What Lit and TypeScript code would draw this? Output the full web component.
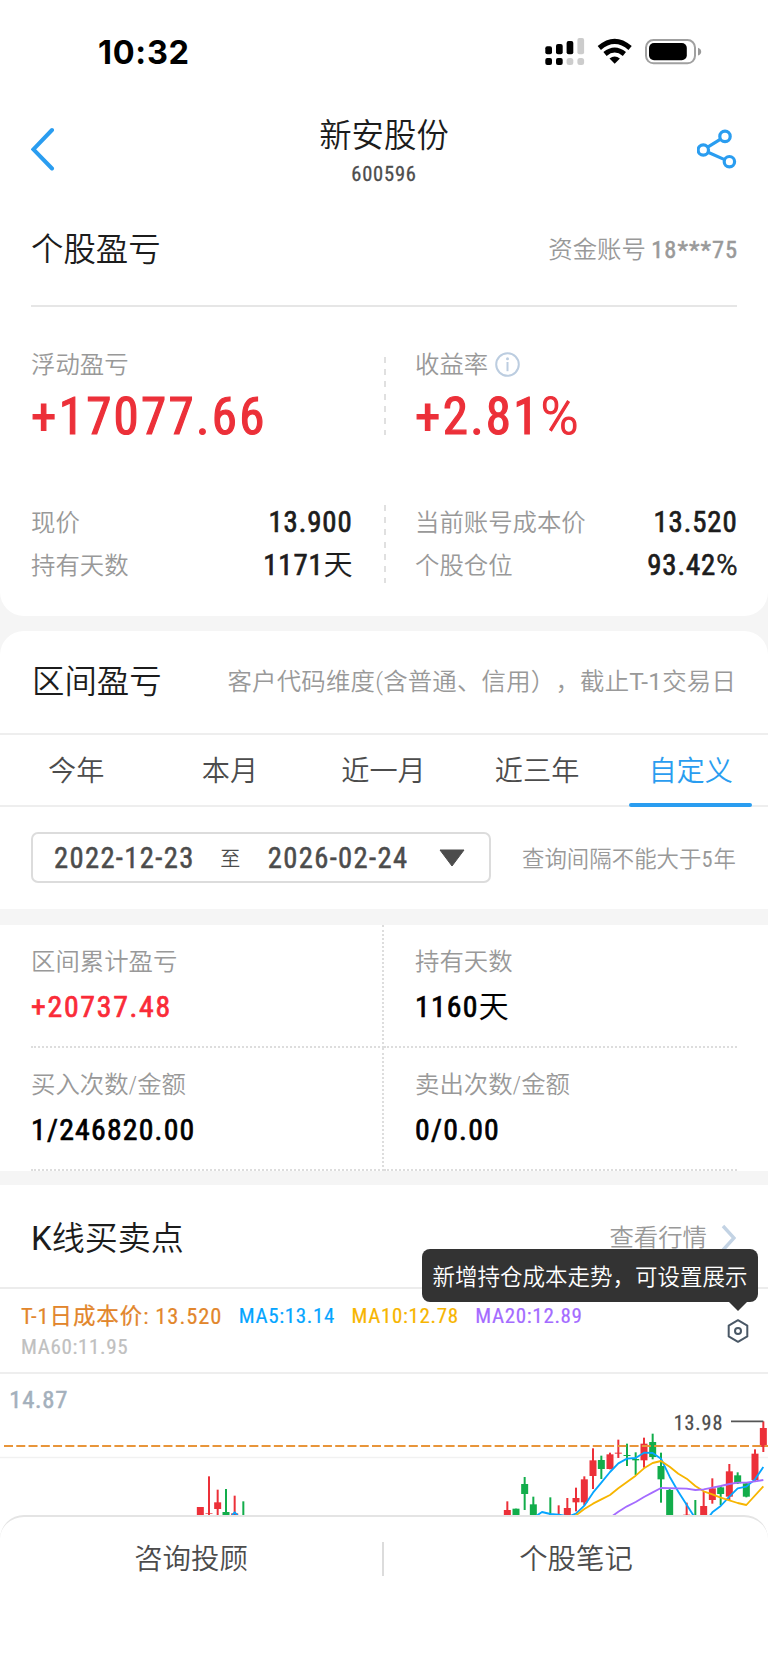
import { LitElement, html, css, svg } from "lit";
import { customElement } from "lit/decorators.js";

const RED = "#ec3039";
const GREEN = "#12ad4b";

// x, high, low, body top, body bottom, colour (chart units: one third of a pixel)
type Candle = [number, number, number, number, number, string];
const candles: Candle[] = [
  [601, 381, 420, 381, 420, RED],
  [627, 289, 420, 400, 402, RED],
  [653, 329, 420, 367, 387, RED],
  [678, 327, 420, 396, 420, GREEN],
  [704, 347, 420, 400, 420, RED],
  [730, 364, 420, 420, 420, GREEN],
  [1522, 364, 420, 390, 420, RED],
  [1548, 386, 420, 386, 420, GREEN],
  [1574, 291, 390, 312, 342, GREEN],
  [1600, 350, 420, 373, 420, GREEN],
  [1651, 352, 420, 420, 420, GREEN],
  [1676, 376, 420, 420, 420, RED],
  [1702, 354, 420, 384, 420, RED],
  [1728, 323, 394, 354, 367, RED],
  [1753, 289, 375, 298, 367, RED],
  [1779, 205, 327, 241, 288, RED],
  [1804, 227, 297, 240, 267, GREEN],
  [1830, 218, 268, 223, 267, RED],
  [1855, 179, 234, 218, 221, RED],
  [1881, 191, 258, 225, 228, GREEN],
  [1907, 217, 285, 237, 241, GREEN],
  [1932, 173, 263, 191, 241, RED],
  [1958, 161, 238, 186, 231, GREEN],
  [1983, 218, 368, 258, 298, GREEN],
  [2009, 325, 420, 330, 420, GREEN],
  [2060, 368, 420, 404, 420, RED],
  [2086, 360, 420, 420, 420, GREEN],
  [2111, 335, 420, 378, 420, RED],
  [2137, 295, 371, 325, 360, RED],
  [2162, 318, 375, 322, 342, GREEN],
  [2188, 252, 361, 274, 350, RED],
  [2213, 277, 312, 286, 310, GREEN],
  [2239, 308, 352, 310, 350, GREEN],
  [2265, 208, 303, 221, 300, RED],
  [2290, 124, 216, 144, 201, RED],
];

const averages: [string, string][] = [
  ["#05a5ff", "M690 414L704 397L720 414"],
  ["#05a5ff", "M1600 414L1626 396L1651 402L1676 404L1706 409L1728 401L1753 377L1779 338L1804 308L1830 276L1855 250L1881 236L1907 234L1932 218L1958 219L1983 236L2009 290L2035 335L2084 412M2126 412L2137 397L2162 378L2188 350L2213 325L2239 320L2265 298L2290 261"],
  ["#f7b500", "M1720 412L1753 387L1779 371L1804 358L1830 345L1855 325L1881 306L1907 287L1932 265L1958 249L1983 243L2009 260L2035 281L2060 296L2086 318L2111 334L2137 343L2162 353L2188 361L2213 369L2239 375L2290 319"],
  ["#a46bff", "M1832 412L1855 395L1881 379L1907 366L1932 351L1958 337L1983 324L2060 326L2086 330L2111 328L2137 323L2162 318L2188 312L2213 308L2239 308L2265 304L2290 300"],
];

@customElement("k-chart")
class KChart extends LitElement {
  static styles = css`
    :host { display: block; height: 141px; }
    svg { display: block; width: 768px; height: 141px; font-family: Roboto, sans-serif; font-stretch: 75%; font-weight: 400; }
    .axis { font-size: 74px; fill: #a4b0bc; stroke: #a4b0bc; stroke-width: 1.5; }
    .mark { font-size: 60px; fill: #4c4c4c; stroke: #4c4c4c; stroke-width: 0.8; }
  `;
  render() {
    return html`<svg viewBox="0 -18 2304 423">
      <path d="M0 232.5H2304" stroke="#f1f1f1" stroke-width="4" />
      <text class="axis" x="28" y="84" textLength="174">14.87</text>
      ${candles.map(
        ([x, high, low, top, bottom, color]) => svg`
          <rect x=${x - 3} y=${high} width="6" height=${low - high} fill=${color} />
          <rect x=${x - 10.5} y=${top} width="21" height=${bottom - top} fill=${color} />`
      )}
      <path d="M12 198H2304" stroke="#e8953a" stroke-width="6.6" stroke-dasharray="27 9.8" />
      ${averages.map(
        ([color, d]) => svg`<path d=${d} fill="none" stroke=${color} stroke-width="5.5" stroke-linejoin="round" />`
      )}
      <text class="mark" x="2021" y="149" textLength="146">13.98</text>
      <path d="M2193 124H2290" stroke="#555" stroke-width="5" />
    </svg>`;
  }
}

@customElement("app-root")
class AppRoot extends LitElement {
  static styles = css`
    :host {
      display: block;
      width: 768px;
      height: 1663px;
      overflow: hidden;
      background: #f5f5f5;
      color: #1c1c1c;
      font-family: Roboto, "Noto Sans CJK SC", sans-serif;
      font-weight: 350;
      font-stretch: 75%;
      text-spacing-trim: space-all;
    }
    * { box-sizing: border-box; }
    svg { display: block; }
    .row { display: flex; align-items: center; justify-content: space-between; white-space: nowrap; }
    .card { background: #fff; }
    .first { height: 616px; border-radius: 0 0 24px 24px; }
    .status { height: 104px; padding: 0 66px 0 98px; }
    .time { font: 700 32.5px/40px Inter, sans-serif; color: #000; letter-spacing: 0.7px; padding-top: 2px; }
    .bar { height: 90px; padding: 0 31px; }
    .name { text-align: center; padding-top: 4px; }
    .name h1 { margin: 0; font-weight: 350; font-size: 32.4px; line-height: 42px; }
    .code { font-size: 20.5px; line-height: 26px; margin-top: 4px; color: #4c4c4c; letter-spacing: 0.8px; font-weight: 400; -webkit-text-stroke: 0.3px; }
    .title { font-size: 32.4px; line-height: 42px; }
    .head { margin: 0 31px; height: 113px; border-bottom: 2px solid #e6e6e6; }
    .muted { color: #999; font-size: 24.4px; line-height: 34px; }
    .account b { font-weight: 400; -webkit-text-stroke: 0.5px; letter-spacing: 1px; margin-right: -1px; }
    .note { font-stretch: 100%; letter-spacing: 0.22px; }
    .latin { font-weight: 400; font-stretch: 100%; }
    .digit { font-weight: 400; letter-spacing: 1px; }
    .pair { display: grid; grid-template-columns: 353px 353px; margin: 0 31px; position: relative; }
    .top { padding-top: 41px; height: 148px; }
    .prices { padding-top: 47px; height: 160px; }
    .rule { position: absolute; left: 353px; width: 2px; height: 78px;
      background: repeating-linear-gradient(to bottom, #e0e0e0 0 6px, transparent 6px 12.2px); }
    .top .rule { top: 50px; }
    .prices .rule { top: 50px; }
    .right { padding-left: 31px; }
    .left { padding-right: 32px; }
    .label { display: flex; align-items: center; gap: 7px; height: 34px; }
    .label svg { margin-top: -2px; }
    .big { color: #ec3039; font-size: 51px; line-height: 60px; margin-top: 5px; letter-spacing: 2.3px; font-weight: 400; -webkit-text-stroke: 1.2px; }
    .percent { font-weight: 350; font-stretch: 100%; letter-spacing: 0; }
    .line { height: 42.5px; }
    .line b { font-weight: 400; -webkit-text-stroke: 0.7px; font-size: 28.8px; line-height: 40px; margin-top: -2px; letter-spacing: 0.9px; margin-right: -0.5px; color: #1c1c1c; }
    .cjk { font-weight: 350; letter-spacing: 0; -webkit-text-stroke: 0.2px; }
    .second { margin-top: 15px; height: 278px; border-radius: 24px 24px 0 0; }
    .period { height: 102px; padding: 0 32px; }
    .tabs { display: grid; grid-template-columns: repeat(5, 1fr); height: 74px; border-top: 2px solid #eee; border-bottom: 2px solid #eee; }
    .tab { display: flex; justify-content: center; align-items: center; font-size: 28.2px; color: #4c4c4c; position: relative; padding: 0 1px 4px 0; }
    .active { color: #2a9df0; }
    .active::after { content: ""; position: absolute; left: 15px; right: 16px; bottom: -2px; height: 4.5px; border-radius: 2px; background: #2a9df0; }
    .query { padding: 25px 32px 0 31px; }
    .dates { width: 460px; height: 51px; border: 2px solid #dcdcdc; border-radius: 7px; padding: 0 24px 0 21px; font-size: 28.6px; color: #4c4c4c; font-weight: 400; letter-spacing: 1.35px; }
    .dates .date { -webkit-text-stroke: 0.5px; }
    .to { font-size: 20px; font-weight: 350; letter-spacing: 0; margin-left: -2px; }
    .date + svg { margin-left: 3px; }
    .hint { color: #999; font-size: 22.4px; letter-spacing: 0.05px; margin-top: -2px; }
    .grid { margin-top: 16px; height: 246px; padding: 0 31px; }
    .cells { display: grid; grid-template-columns: 353px 353px; grid-template-rows: 123px 123px; }
    .cell { border-bottom: 2px dotted #ddd; padding: 20px 0 0 0; }
    .cell.first-col { border-right: 2px dotted #ddd; }
    .cell.second-col { padding-left: 31px; }
    .cell b { display: block; font-weight: 400; -webkit-text-stroke: 0.7px; font-size: 29.8px; line-height: 40px; margin-top: 8px; color: #000; letter-spacing: 1.2px; }
    .cell b.red { color: #fa2b38; letter-spacing: 1.7px; }
    .kline { margin-top: 14px; height: 330px; position: relative; }
    .khead { height: 104px; padding: 4px 32px 0 31px; border-bottom: 2px solid #ececec; }
    .khead .title { font-size: 33px; padding-top: 2px; }
    .more { display: flex; align-items: center; gap: 14px; }
    .mas { height: 85px; border-bottom: 2px solid #eee; padding: 12px 18px 0 21px; display: flex; justify-content: space-between; }
    .legend { font-size: 21px; line-height: 31px; width: 600px; display: flex; flex-wrap: wrap; column-gap: 16.5px; align-content: flex-start; letter-spacing: 0.65px; font-weight: 400; -webkit-text-stroke: 0.2px; }
    .cost { color: #e2862b; font-size: 22.5px; letter-spacing: 0.9px; }
    .m5 { color: #05a5ff; } .m10 { color: #f7b500; } .m20 { color: #a46bff; } .m60 { color: #c0c0c0; }
    .gear { margin-top: 17px; }
    .tip { position: absolute; z-index: 2; left: 422px; top: 64px; width: 336px; height: 53px; border-radius: 8px; background: #333; color: #fff; font-size: 22.5px; line-height: 56px; text-align: center; white-space: nowrap; }
    .tip::after { content: ""; position: absolute; right: 10px; top: 52px; border: 10px solid transparent; border-top-color: #333; border-bottom: 0; }
    .nav { height: 148px; background: #fff; border-top: 2px solid #e4e4e4; border-radius: 24px 24px 0 0; display: grid; grid-template-columns: 382px 2px 384px; align-items: start; text-align: center; font-size: 28.4px; line-height: 40px; color: #4c4c4c; padding-top: 23px; }
    .sep { background: #dcdcdc; height: 34px; margin-top: 2px; }
  `;

  render() {
    return html`
      <section class="card first">
        <div class="row status">
          <span class="time">10:32</span>
          <svg width="158" height="30" viewBox="544 37 158 30">
            <g fill="#000">
              <rect x="545.3" y="46.3" width="6.7" height="8" rx="2" />
              <rect x="556" y="44" width="6.7" height="10.3" rx="2" />
              <rect x="566.6" y="41" width="6.7" height="13.3" rx="2" />
              <rect x="545.3" y="58" width="6.7" height="7" rx="2" />
              <rect x="556" y="58" width="6.7" height="7" rx="2" />
            </g>
            <g fill="#ccc">
              <rect x="577.4" y="38" width="6.7" height="16.3" rx="2" />
              <rect x="566.6" y="58" width="6.7" height="7" rx="2.5" />
              <rect x="577.4" y="58" width="6.7" height="7" rx="2.5" />
            </g>
            <path d="M599.3 48Q614.7 34.6 630.1 48M605 54Q614.7 46 624.4 54" fill="none" stroke="#000" stroke-width="5" />
            <path d="M609.5 58.6Q614.7 54.2 619.9 58.6L614.7 63.8Z" />
            <rect x="646" y="40" width="49" height="23.3" rx="7.5" fill="none" stroke="#a0a0a0" stroke-width="2" />
            <rect x="649" y="43" width="37.8" height="17.3" rx="5" />
            <path d="M698 47.8Q701.2 49 701.2 51.7T698 55.6Z" fill="#999" />
          </svg>
        </div>
        <div class="row bar">
          <svg width="40" height="44" viewBox="0 0 40 44"><path d="M21 3L2.4 22.3L21 41.5" fill="none" stroke="#2a9df0" stroke-width="4" stroke-linecap="round" /></svg>
          <div class="name"><h1>新安股份</h1><div class="code">600596</div></div>
          <svg width="40" height="44" viewBox="697 127 40 44"><g fill="none" stroke="#2a9df0" stroke-width="3.2"><circle cx="725" cy="136.4" r="5.2" /><circle cx="703.3" cy="150" r="5.2" /><circle cx="729.4" cy="161.7" r="5.2" /><path d="M707.7 147.2L720.6 139.2M708 152.2L724.6 159.6" /></g></svg>
        </div>
        <div class="row head">
          <span class="title">个股盈亏</span>
          <span class="muted account">资金账号 <b>18***75</b></span>
        </div>
        <div class="pair top">
          <div class="left">
            <div class="label muted">浮动盈亏</div>
            <div class="big">+17077.66</div>
          </div>
          <div class="right">
            <div class="label muted">收益率
              <svg width="25" height="25" viewBox="0 0 25 25"><circle cx="12.5" cy="12.5" r="11.3" fill="none" stroke="#bccde0" stroke-width="2" /><circle cx="12.5" cy="6.7" r="1.5" fill="#bccde0" /><path d="M12.5 10V19.2" stroke="#bccde0" stroke-width="2" /></svg>
            </div>
            <div class="big">+2.81<span class="percent">%</span></div>
          </div>
          <div class="rule"></div>
        </div>
        <div class="pair prices">
          <div class="left">
            <div class="row line muted">现价<b>13.900</b></div>
            <div class="row line muted">持有天数<b>1171<span class="cjk">天</span></b></div>
          </div>
          <div class="right">
            <div class="row line muted">当前账号成本价<b>13.520</b></div>
            <div class="row line muted">个股仓位<b>93.42<span class="percent">%</span></b></div>
          </div>
          <div class="rule"></div>
        </div>
      </section>

      <section class="card second">
        <div class="row period">
          <span class="title">区间盈亏</span>
          <span class="muted note">客户代码维度(含普通、信用），截止<span class="latin">T-1</span>交易日</span>
        </div>
        <div class="tabs">
          <div class="tab">今年</div><div class="tab">本月</div><div class="tab">近一月</div><div class="tab">近三年</div><div class="tab active">自定义</div>
        </div>
        <div class="row query">
          <div class="row dates">
            <span class="date">2022-12-23</span><span class="to">至</span><span class="date">2026-02-24</span>
            <svg width="26" height="18" viewBox="0 0 26 18"><path d="M1 1H25L13 17Z" fill="#4c4c4c" stroke="#4c4c4c" stroke-linejoin="round" /></svg>
          </div>
          <span class="hint">查询间隔不能大于<span class="digit">5</span>年</span>
        </div>
      </section>

      <section class="card grid">
        <div class="cells">
          <div class="cell first-col"><div class="muted">区间累计盈亏</div><b class="red">+20737.48</b></div>
          <div class="cell second-col"><div class="muted">持有天数</div><b>1160<span class="cjk">天</span></b></div>
          <div class="cell first-col"><div class="muted">买入次数/金额</div><b>1/246820.00</b></div>
          <div class="cell second-col"><div class="muted">卖出次数/金额</div><b>0/0.00</b></div>
        </div>
      </section>

      <section class="card kline">
        <div class="row khead">
          <span class="title"><span class="latin">K</span>线买卖点</span>
          <span class="more muted">查看行情<svg width="15" height="28" viewBox="0 0 15 28"><path d="M2 2L13 14L2 26" fill="none" stroke="#c3d3e4" stroke-width="3.4" /></svg></span>
        </div>
        <div class="mas">
          <div class="legend">
            <span class="cost">T-1日成本价: 13.520</span><span class="m5">MA5:13.14</span><span class="m10">MA10:12.78</span><span class="m20">MA20:12.89</span><span class="m60">MA60:11.95</span>
          </div>
          <svg class="gear" width="24" height="26" viewBox="0 0 24 26"><path d="M12 2.2L21.3 7.6V18.4L12 23.8L2.7 18.4V7.6Z" fill="none" stroke="#4a5866" stroke-width="2" stroke-linejoin="round" /><circle cx="12" cy="13" r="3" fill="none" stroke="#4a5866" stroke-width="2" /></svg>
        </div>
        <k-chart></k-chart>
        <div class="tip">新增持仓成本走势，可设置展示</div>
      </section>

      <footer class="card">
        <nav class="nav">
          <span>咨询投顾</span><span class="sep"></span><span>个股笔记</span>
        </nav>
      </footer>
    `;
  }
}
